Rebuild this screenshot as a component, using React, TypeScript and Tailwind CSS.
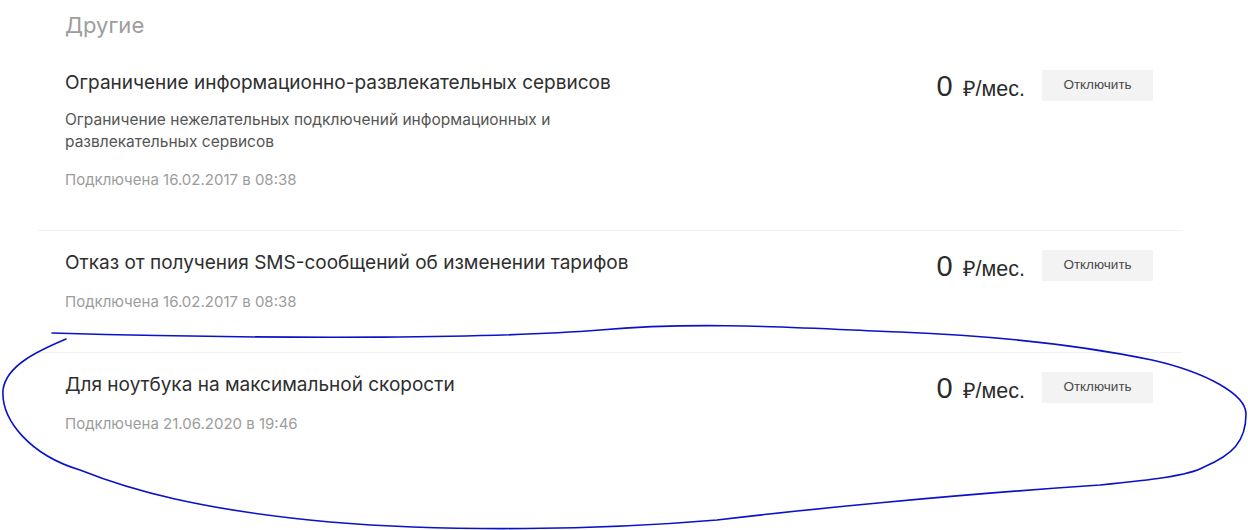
import React from "react";

const services = [
  {
    id: 1,
    title: "Ограничение информационно-развлекательных сервисов",
    description:
      "Ограничение нежелательных подключений информационных и развлекательных сервисов",
    connected: "Подключена 16.02.2017 в 08:38",
  },
  {
    id: 2,
    title: "Отказ от получения SMS-сообщений об изменении тарифов",
    description: "",
    connected: "Подключена 16.02.2017 в 08:38",
  },
  {
    id: 3,
    title: "Для ноутбука на максимальной скорости",
    description: "",
    connected: "Подключена 21.06.2020 в 19:46",
  },
];

const ServiceRow = ({ item, last }: { item: any; last: boolean }) => {
  return (
    <div
      className={
        "flex items-start justify-between pl-[27px] pr-[29px] pt-[19px] pb-[40px] " +
        (last ? "" : "border-b border-[#f1f1f1]")
      }
    >
      <div className="flex flex-col">
        <div className="text-[19px] leading-[25px] text-[#2e2e2e]">{item.title}</div>
        {item.description && (
          <div className="mt-[14px] max-w-[510px] text-[15.5px] leading-[22px] text-[#555]">
            {item.description}
          </div>
        )}
        <div className="mt-[17px] text-[15px] leading-[20px] text-[#9c9c9c]">
          {item.connected}
        </div>
      </div>
      <div className="flex items-start">
        <div className="flex items-baseline font-['Liberation_Sans',Arial,sans-serif] text-[#2b2b2b]">
          <span className="text-[29px] leading-[32px]">0</span>
          <span className="ml-[10px] text-[21.5px] leading-[32px]">₽/мес.</span>
        </div>
        <button
          type="button"
          className="ml-[17px] h-[31px] w-[111px] bg-[#f3f3f3] text-[13.5px] text-[#4a4a4a] font-['Liberation_Sans',Arial,sans-serif]"
        >
          Отключить
        </button>
      </div>
    </div>
  );
};

export default function App() {
  return (
    <div className="relative h-[530px] w-[1248px] overflow-hidden bg-white font-['Inter','Roboto',sans-serif]">
      <div className="pt-[10px] pl-[65px] text-[22px] leading-[30px] text-[#9d9d9d] mb-[11px]">
        Другие
      </div>
      <div className="ml-[38px] w-[1144px]">
        {services.map((s, i) => (
          <ServiceRow key={s.id} item={s} last={i === services.length - 1} />
        ))}
      </div>

      {/* pen mark drawn over the last row */}
      <svg
        className="pointer-events-none absolute left-0 top-0"
        width="1248"
        height="530"
        viewBox="0 0 1248 530"
        fill="none"
      >
        <path
          d="M66 339 C40 350 6 365 3 390 C1 420 30 455 80 470 C130 490 200 510 330 522 C450 532 600 530 717 520 C800 510 950 495 1100 485 C1150 480 1188 476 1204 467 C1232 455 1246 442 1246 414 C1246 394 1205 372 1152 360 C1080 345 1000 336 900 332 C800 328 700 321 600 330 C500 338 300 340 52 333"
          stroke="#0a12c8"
          strokeWidth="1.6"
          strokeLinecap="round"
        />
      </svg>
    </div>
  );
}
